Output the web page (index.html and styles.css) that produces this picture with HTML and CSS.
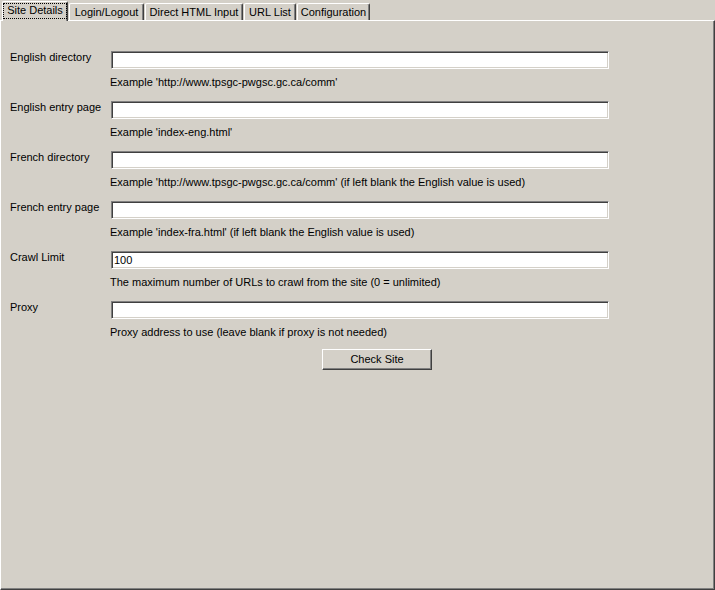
FILE: index.html
```html
<!DOCTYPE html>
<html>
<head>
<meta charset="utf-8">
<title>Site Details</title>
<link rel="stylesheet" href="styles.css">
</head>
<body>
<div class="window">
  <div class="tabs">
    <div class="tab tab-site active"><span class="focus">Site Details</span></div>
    <div class="tab tab-login">Login/Logout</div>
    <div class="tab tab-direct">Direct HTML Input</div>
    <div class="tab tab-url">URL List</div>
    <div class="tab tab-config">Configuration</div>
  </div>
  <div class="panel">
    <div class="form">
      <div class="row">
        <label class="label">English directory</label>
        <div class="field">
          <input class="text" type="text" value="">
          <div class="hint">Example 'http://www.tpsgc-pwgsc.gc.ca/comm'</div>
        </div>
      </div>
      <div class="row">
        <label class="label">English entry page</label>
        <div class="field">
          <input class="text" type="text" value="">
          <div class="hint">Example 'index-eng.html'</div>
        </div>
      </div>
      <div class="row">
        <label class="label">French directory</label>
        <div class="field">
          <input class="text" type="text" value="">
          <div class="hint">Example 'http://www.tpsgc-pwgsc.gc.ca/comm' (if left blank the English value is used)</div>
        </div>
      </div>
      <div class="row">
        <label class="label">French entry page</label>
        <div class="field">
          <input class="text" type="text" value="">
          <div class="hint">Example 'index-fra.html' (if left blank the English value is used)</div>
        </div>
      </div>
      <div class="row">
        <label class="label">Crawl Limit</label>
        <div class="field">
          <input class="text" type="text" value="100">
          <div class="hint">The maximum number of URLs to crawl from the site (0 = unlimited)</div>
        </div>
      </div>
      <div class="row">
        <label class="label">Proxy</label>
        <div class="field">
          <input class="text" type="text" value="">
          <div class="hint">Proxy address to use (leave blank if proxy is not needed)</div>
        </div>
      </div>
    </div>
    <div class="actions">
      <button class="btn" type="button">Check Site</button>
    </div>
  </div>
</div>
</body>
</html>
```

FILE: styles.css
```css
html, body {
  margin: 0;
  padding: 0;
}

body {
  width: 715px;
  height: 590px;
  overflow: hidden;
  background: #D4D0C8;
  color: #000;
  font-family: "Liberation Sans", Arial, sans-serif;
  font-size: 11px;
  line-height: 13px;
}

.window {
  display: flex;
  flex-direction: column;
  width: 715px;
  height: 590px;
}

.tabs {
  display: flex;
  align-items: flex-end;
  height: 20px;
  padding-left: 2px;
  position: relative;
  z-index: 2;
}

.tab {
  box-sizing: border-box;
  height: 17px;
  margin-right: 1px;
  padding-top: 2px;
  border-top: 1px solid #FFFFFF;
  border-left: 1px solid #FFFFFF;
  border-right: 1px solid #404040;
  border-top-left-radius: 2px;
  border-top-right-radius: 2px;
  box-shadow: inset -1px 0 0 #808080;
  background: #D4D0C8;
  text-align: center;
  white-space: nowrap;
}

.tab.active {
  height: 20px;
  margin-bottom: -1px;
  padding-top: 1px;
}

.tab-site { width: 66px; }
.tab-login { width: 75px; }
.tab-direct { width: 98px; }
.tab-url { width: 52px; }
.tab-config { width: 73px; }

.focus {
  display: inline-block;
  border: 1px dotted #000;
  padding: 0 3px 1px 3px;
}

.panel {
  box-sizing: border-box;
  flex: 1;
  border-top: 1px solid #FFFFFF;
  border-left: 1px solid #FFFFFF;
  border-right: 1px solid #404040;
  border-bottom: 1px solid #404040;
  box-shadow: inset -1px -1px 0 #808080;
  padding: 30px 0 0 9px;
}

.form {
  display: flex;
  flex-direction: column;
  gap: 12px;
}

.row {
  display: flex;
}

.label {
  width: 100px;
  flex: none;
}

.field {
  display: flex;
  flex-direction: column;
  gap: 7px;
}

.text {
  box-sizing: border-box;
  display: block;
  width: 498px;
  height: 18px;
  margin: 0 0 0 1px;
  padding: 0 2px;
  border: 1px solid;
  border-color: #808080 #FFFFFF #FFFFFF #808080;
  box-shadow: inset 1px 1px 0 #404040, inset -1px -1px 0 #D4D0C8;
  background: #FFFFFF;
  color: #000;
  font-family: "Liberation Sans", Arial, sans-serif;
  font-size: 11px;
  line-height: 14px;
  outline: none;
}

.hint {
  white-space: nowrap;
}

.actions {
  display: flex;
  padding: 10px 0 0 312px;
}

.btn {
  box-sizing: border-box;
  width: 110px;
  height: 21px;
  padding: 0;
  border: 1px solid;
  border-color: #FFFFFF #404040 #404040 #FFFFFF;
  box-shadow: inset -1px -1px 0 #808080;
  background: #D4D0C8;
  color: #000;
  font-family: "Liberation Sans", Arial, sans-serif;
  font-size: 11px;
  line-height: 13px;
  cursor: default;
}
```
